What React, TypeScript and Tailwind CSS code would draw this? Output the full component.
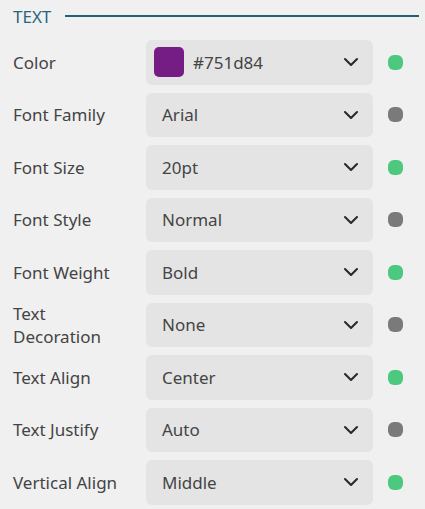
import { ChevronDown } from "lucide-react";

type Row = { label: string; value: string; set: boolean; swatch?: string };

const rows: Row[] = [
  { label: "Color", value: "#751d84", set: true, swatch: "#751d84" },
  { label: "Font Family", value: "Arial", set: false },
  { label: "Font Size", value: "20pt", set: true },
  { label: "Font Style", value: "Normal", set: false },
  { label: "Font Weight", value: "Bold", set: true },
  { label: "Text Decoration", value: "None", set: false },
  { label: "Text Align", value: "Center", set: true },
  { label: "Text Justify", value: "Auto", set: false },
  { label: "Vertical Align", value: "Middle", set: true },
];

export default function App() {
  return (
    <main
      className="min-h-screen bg-[#f0f0f0] pl-[13px] pr-[6px] pt-[6px] text-[#444444]"
      style={{ fontFamily: '"Noto Sans", "Open Sans", sans-serif' }}
    >
      <div className="flex items-center gap-[14px] h-[20px]">
        <span className="text-[17px] leading-none text-[#2a6580]">TEXT</span>
        <span className="flex-1 h-[2px] bg-[#215f7b]" />
      </div>

      <div className="mt-[14px] flex flex-col gap-[8px]">
        {rows.map((row) => (
          <div key={row.label} className="flex items-center h-[44.5px]">
            <div className="w-[133px] pr-[21px] text-[17px] leading-[23px]">{row.label}</div>
            <div className="w-[227px] h-full rounded-[6px] bg-[#e4e4e4] flex items-center pl-[8px] pr-[10px]">
              {row.swatch ? (
                <>
                  <span
                    className="w-[30px] h-[30px] rounded-[5px] shrink-0"
                    style={{ backgroundColor: row.swatch }}
                  />
                  <span className="ml-[9px] flex-1 text-[17px]">{row.value}</span>
                </>
              ) : (
                <span className="ml-[8px] flex-1 text-[17px]">{row.value}</span>
              )}
              <ChevronDown size={24} strokeWidth={2.1} className="text-[#2a2a2a]" />
            </div>
            <span
              className={`ml-[15px] w-[15px] h-[15px] rounded-[6px] ${
                row.set ? "bg-[#4cc97f]" : "bg-[#7a7a7a]"
              }`}
            />
          </div>
        ))}
      </div>
    </main>
  );
}
